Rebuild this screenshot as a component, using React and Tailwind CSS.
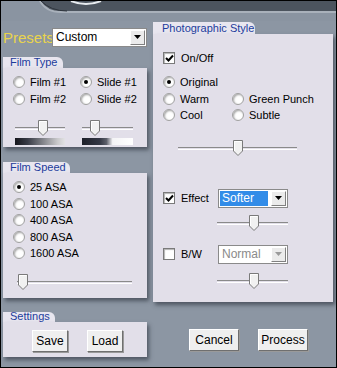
import React from "react";

const font = { fontFamily: '"Liberation Sans", Arial, sans-serif' };

const Radio = ({ checked, label }) => (
  <div className="flex items-center h-[16.5px] gap-[5px] text-[11px] text-black">
    <span className="w-[12px] h-[12px] rounded-full bg-white border border-[#a0a0a0] shadow-[inset_1px_1px_2px_rgba(0,0,0,0.35)] flex items-center justify-center shrink-0">
      {checked && <span className="w-[4px] h-[4px] rounded-full bg-black" />}
    </span>
    <span>{label}</span>
  </div>
);

const Check = ({ checked }) => (
  <span className="w-[12px] h-[12px] bg-white border border-[#7a7a7a] shadow-[inset_1px_1px_1px_rgba(0,0,0,0.3)] flex items-center justify-center shrink-0">
    {checked && (
      <svg width="9" height="9" viewBox="0 0 9 9">
        <path d="M1 4 L3.5 6.5 L8 1.5" fill="none" stroke="black" strokeWidth="2" />
      </svg>
    )}
  </span>
);

const Slider = ({ width, pos }) => (
  <div className="relative h-[16px]" style={{ width }}>
    <div className="absolute left-0 right-0 top-[7px] h-[3px] border-t border-[#8a8a8a] border-b border-b-white" />
    <svg className="absolute top-0" style={{ left: pos }} width="10" height="16" viewBox="0 0 10 16">
      <path d="M0.5 0.5 H9.5 V11 L5 15.5 L0.5 11 Z" fill="#f1f1f1" stroke="#7a7a7a" />
      <path d="M1.5 11 V1.5 H8.5" fill="none" stroke="#ffffff" />
    </svg>
  </div>
);

const Select = ({ value, width, active, disabled }) => (
  <div
    className="flex h-[19px] bg-white border border-[#8a8a8a] p-[1px] text-[12px]"
    style={{ width }}
  >
    <div className="flex-1 flex items-center">
      <span
        className={
          active
            ? "bg-[#328ce8] text-white px-[2px] w-[48px] h-full flex items-center"
            : disabled
            ? "text-[#8a8a8a] px-[2px]"
            : "text-black px-[2px]"
        }
      >
        {value}
      </span>
    </div>
    <div className="w-[15px] h-full bg-[#ebebeb] border border-t-white border-l-white border-r-[#808080] border-b-[#808080] flex items-center justify-center">
      <svg width="7" height="4" viewBox="0 0 7 4">
        <path d="M0 0 H7 L3.5 4 Z" fill={disabled ? "#9a9a9a" : "black"} />
      </svg>
    </div>
  </div>
);

const Button = ({ label, width }) => (
  <button
    className="h-[22px] bg-[#efefef] border border-t-white border-l-white border-r-[#6f6f6f] border-b-[#6f6f6f] shadow-[1px_1px_0_#9a9a9a] text-[12px] text-black"
    style={{ width }}
  >
    {label}
  </button>
);

const Tab = ({ label, width, height = 11, pl = 7 }) => (
  <div
    className="bg-[#e8e6ef] rounded-tr-[6px] text-[11px] leading-[11px] text-[#1d3c9c] flex items-end"
    style={{ width, height, paddingLeft: pl }}
  >
    {label}
  </div>
);

const Panel = ({ children, height, className = "" }) => (
  <div
    className={"bg-[#e2dfe9] shadow-[2px_3px_4px_rgba(30,35,45,0.55)] " + className}
    style={{ height }}
  >
    {children}
  </div>
);

export default function App() {
  return (
    <div
      className="w-[337px] h-[368px] border border-black bg-[#8c96a3] flex flex-col overflow-hidden"
      style={font}
    >
      <div className="h-[20px] shrink-0">
        <svg width="335" height="20" viewBox="0 0 335 20">
          <rect x="0" y="0" width="335" height="20" fill="#8a94a1" />
          <path d="M38 0 H335 V12 H60 Q44 12 38 0 Z" fill="#a9b1bb" />
          <path d="M40 0 H335 V10 H60 Q46 10 40 0 Z" fill="#4c545e" />
          <path d="M70 0 Q85 6 100 0" fill="none" stroke="#e8ecf0" strokeWidth="2" />
          <path d="M40 0 Q50 10 66 10" fill="none" stroke="#2f353d" strokeWidth="1" />
        </svg>
      </div>
      <div className="flex">
        {/* left column */}
        <div className="ml-[2px] w-[144px] flex flex-col">
          <div className="mt-[6px] h-[20px] flex items-center">
            <span className="w-[49px] text-[15px] leading-[15px] text-[#e9d44c]">Presets</span>
            <Select value="Custom" width={95} />
          </div>

          <div className="mt-[10px]">
            <Tab label="Film Type" width={60} />
            <Panel height={79} className="pl-[10px] pt-[6px]">
              <div className="grid grid-cols-[67px_1fr]">
                <Radio label="Film #1" />
                <Radio label="Slide #1" checked />
                <Radio label="Film #2" />
                <Radio label="Slide #2" />
              </div>
              <div className="flex mt-[13px] pl-[2px] gap-[17px]">
                <div className="flex flex-col">
                  <Slider width={50} pos={23} />
                  <div className="mt-[2px] h-[7px] w-[50px] bg-[linear-gradient(to_right,#15161c,#383b46_25%,#c9c9cb_85%,#e2e2e4)]" />
                </div>
                <div className="flex flex-col">
                  <Slider width={51} pos={8} />
                  <div className="mt-[2px] h-[7px] w-[51px] bg-[linear-gradient(to_right,#1d2029,#343845_35%,#5d606b_48%,#f4f4f6_60%,#ffffff)]" />
                </div>
              </div>
            </Panel>
          </div>

          <div className="mt-[15px]">
            <Tab label="Film Speed" width={67} />
            <Panel height={125} className="pl-[10px] pt-[6px]">
              <Radio label="25 ASA" checked />
              <Radio label="100 ASA" />
              <Radio label="400 ASA" />
              <Radio label="800 ASA" />
              <Radio label="1600 ASA" />
              <div className="mt-[12px] pl-[4px]">
                <Slider width={115} pos={1} />
              </div>
            </Panel>
          </div>

          <div className="mt-[14px]">
            <Tab label="Settings" width={52} height={10} />
            <Panel height={35} className="pl-[29px] pt-[8px] flex gap-[19px]">
              <Button label="Save" width={36} />
              <Button label="Load" width={36} />
            </Panel>
          </div>
        </div>

        {/* right column */}
        <div className="ml-[6px] w-[180px] flex flex-col">
          <div className="mt-[1px]">
            <Tab label="Photographic Style" width={102} height={12} pl={9} />
            <Panel height={268} className="pl-[10px] flex flex-col">
              <div className="mt-[17px] h-[14px] flex items-center gap-[6px] text-[11px]">
                <Check checked />
                <span>On/Off</span>
              </div>
              <div className="mt-[9px] grid grid-cols-[69px_1fr]">
                <Radio label="Original" checked />
                <div />
                <Radio label="Warm" />
                <Radio label="Green Punch" />
                <Radio label="Cool" />
                <Radio label="Subtle" />
              </div>
              <div className="mt-[16px] pl-[15px]">
                <Slider width={119} pos={55} />
              </div>
              <div className="mt-[33px] flex items-center h-[19px]">
                <div className="w-[55px] flex items-center gap-[6px] text-[11px]">
                  <Check checked />
                  <span>Effect</span>
                </div>
                <Select value="Softer" width={70} active />
              </div>
              <div className="mt-[7px] pl-[54px]">
                <Slider width={71} pos={32} />
              </div>
              <div className="mt-[14px] flex items-center h-[19px]">
                <div className="w-[55px] flex items-center gap-[6px] text-[11px]">
                  <Check />
                  <span>B/W</span>
                </div>
                <Select value="Normal" width={70} disabled />
              </div>
              <div className="mt-[9px] pl-[54px]">
                <Slider width={71} pos={32} />
              </div>
            </Panel>
          </div>
          <div className="mt-[27px] flex pl-[36px] gap-[19px]">
            <Button label="Cancel" width={50} />
            <Button label="Process" width={50} />
          </div>
        </div>
      </div>
    </div>
  );
}
